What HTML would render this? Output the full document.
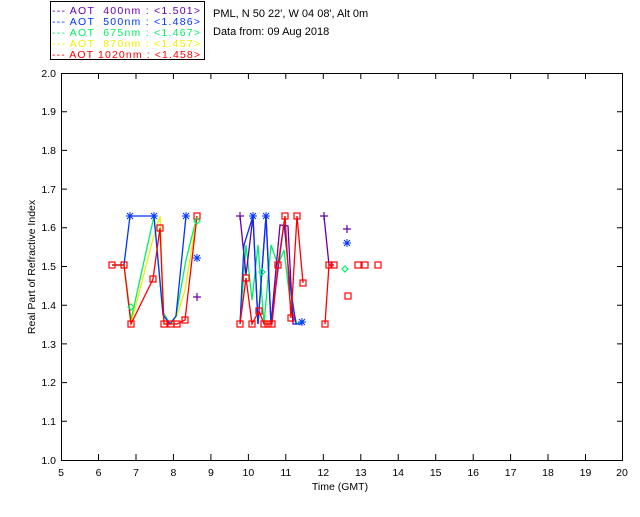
<!DOCTYPE html>
<html><head><style>
body{margin:0;background:#fff;width:640px;height:512px;overflow:hidden}
svg text{font-family:"Liberation Sans",sans-serif;font-size:10.5px}
</style></head><body>
<svg width="640" height="512" xmlns="http://www.w3.org/2000/svg">
<rect x="50.5" y="1.5" width="154" height="58" fill="none" stroke="#000"/>
<g font-size="11">
<text x="52" y="14" fill="#6600aa" textLength="148" lengthAdjust="spacing">--- AOT &#160;400nm : &lt;1.501&gt;</text>
<text x="52" y="25" fill="#0033ff" textLength="148" lengthAdjust="spacing">--- AOT &#160;500nm : &lt;1.486&gt;</text>
<text x="52" y="36" fill="#00ee66" textLength="148" lengthAdjust="spacing">--- AOT &#160;675nm : &lt;1.467&gt;</text>
<text x="52" y="47" fill="#eeee00" textLength="148" lengthAdjust="spacing">--- AOT &#160;870nm : &lt;1.457&gt;</text>
<text x="52" y="58" fill="#ff0000" textLength="148" lengthAdjust="spacing">--- AOT 1020nm : &lt;1.458&gt;</text>
</g>
<text x="213" y="17" style="font-size:11px">PML, N 50 22', W 04 08', Alt 0m</text>
<text x="213" y="35" style="font-size:11px">Data from: 09 Aug 2018</text>
<rect x="61.5" y="73.5" width="561" height="387" fill="none" stroke="#000"/>
<g stroke="#000">
<path d="M98.5 73v6M136 73v6M173.4 73v6M210.9 73v6M248.4 73v6M285.8 73v6M323.3 73v6M360.8 73v6M398.2 73v6M435.7 73v6M473.2 73v6M510.6 73v6M548 73v6M585.5 73v6
M98.5 460v-6M136 460v-6M173.4 460v-6M210.9 460v-6M248.4 460v-6M285.8 460v-6M323.3 460v-6M360.8 460v-6M398.2 460v-6M435.7 460v-6M473.2 460v-6M510.6 460v-6M548 460v-6M585.5 460v-6
M61 421.3h6M61 382.6h6M61 343.9h6M61 305.2h6M61 266.5h6M61 227.8h6M61 189.1h6M61 150.4h6M61 111.7h6
M623 421.3h-6M623 382.6h-6M623 343.9h-6M623 305.2h-6M623 266.5h-6M623 227.8h-6M623 189.1h-6M623 150.4h-6M623 111.7h-6"/>
</g>
<g text-anchor="middle">
<text x="61" y="476">5</text><text x="98.5" y="476">6</text><text x="136" y="476">7</text><text x="173.4" y="476">8</text><text x="210.9" y="476">9</text><text x="248.4" y="476">10</text><text x="285.8" y="476">11</text><text x="323.3" y="476">12</text><text x="360.8" y="476">13</text><text x="398.2" y="476">14</text><text x="435.7" y="476">15</text><text x="473.2" y="476">16</text><text x="510.6" y="476">17</text><text x="548" y="476">18</text><text x="585.5" y="476">19</text><text x="622" y="476">20</text>
<text x="340" y="490">Time (GMT)</text>
</g>
<g text-anchor="end">
<text x="56" y="464">1.0</text><text x="56" y="425">1.1</text><text x="56" y="386">1.2</text><text x="56" y="348">1.3</text><text x="56" y="309">1.4</text><text x="56" y="270">1.5</text><text x="56" y="231">1.6</text><text x="56" y="193">1.7</text><text x="56" y="154">1.8</text><text x="56" y="115">1.9</text><text x="56" y="77">2.0</text>
</g>
<text transform="translate(35,267) rotate(-90)" text-anchor="middle">Real Part of Refractive Index</text>
<g fill="none" stroke-width="1.3">
<polyline stroke="#00ee66" points="112,265 124,265 131,320 154,216 163,312 170,324 176,316 186,260 197,216"/>
<polyline stroke="#eeee00" points="112,265 124,265 131,324 153,239 160,216 164,324 171,324 177,316 185,290 197,216"/>
<polyline stroke="#0033ff" points="112,265 124,265 130,216 154,216 163,315 170,324 176,316 186,216"/>
<polyline stroke="#00ee66" points="240,324 246,245 252,300 258,245 264,324 271,245 278,265 284,250 290,300 297,324 303,320"/>
<polyline stroke="#6600aa" points="240,216 246,275 253,216 258,324 266,216 271,324 280,225 288,226 293,324 296,324"/>
<polyline stroke="#0033ff" points="240,324 244,245 253,216 258,324 266,216 271,324 284,223 290,285 296,324 302,324"/>
<polyline stroke="#6600aa" points="324,216 329,265 334,265"/>
<polyline stroke="#ff0000" points="112,265 124,265 131,324 153,279 160,228 164,324 171,324 177,324 185,320 197,216"/>
<polyline stroke="#ff0000" points="240,324 246,278 252,324 259,311 264,324 268,324 272,324 278,265 285,216 291,318 297,216 303,283"/>
<polyline stroke="#ff0000" points="325,324 329,265 334,265"/>
</g>
<g fill="none" stroke="#ff0000" stroke-width="1.2">
<rect x="109" y="262" width="6" height="6"/><rect x="121" y="262" width="6" height="6"/><rect x="128" y="321" width="6" height="6"/><rect x="150" y="276" width="6" height="6"/><rect x="157" y="225" width="6" height="6"/><rect x="161" y="321" width="6" height="6"/><rect x="168" y="321" width="6" height="6"/><rect x="174" y="321" width="6" height="6"/><rect x="182" y="317" width="6" height="6"/><rect x="194" y="213" width="6" height="6"/>
<rect x="237" y="321" width="6" height="6"/><rect x="243" y="275" width="6" height="6"/><rect x="249" y="321" width="6" height="6"/><rect x="256" y="308" width="6" height="6"/><rect x="261" y="321" width="6" height="6"/><rect x="265" y="321" width="6" height="6"/><rect x="269" y="321" width="6" height="6"/><rect x="275" y="262" width="6" height="6"/><rect x="282" y="213" width="6" height="6"/><rect x="288" y="315" width="6" height="6"/><rect x="294" y="213" width="6" height="6"/><rect x="300" y="280" width="6" height="6"/>
<rect x="322" y="321" width="6" height="6"/><rect x="326" y="262" width="6" height="6"/><rect x="331" y="262" width="6" height="6"/><rect x="345" y="293" width="6" height="6"/><rect x="355" y="262" width="6" height="6"/><rect x="362" y="262" width="6" height="6"/><rect x="375" y="262" width="6" height="6"/>
</g>
<g stroke="#0033ff" stroke-width="1">
<path d="M126 216h8M130 212v8M127 213l6 6M133 213l-6 6 M150 216h8M154 212v8M151 213l6 6M157 213l-6 6 M182 216h8M186 212v8M183 213l6 6M189 213l-6 6 M193 258h8M197 254v8M194 255l6 6M200 255l-6 6 M249 216h8M253 212v8M250 213l6 6M256 213l-6 6 M262 216h8M266 212v8M263 213l6 6M269 213l-6 6 M343 243h8M347 239v8M344 240l6 6M350 240l-6 6 M298 322h8M302 318v8M299 319l6 6M305 319l-6 6"/>
</g>
<g stroke="#6600aa" stroke-width="1.2">
<path d="M193 297h8M197 293v8 M236 216h8M240 212v8 M320 216h8M324 212v8 M343 229h8M347 225v8"/>
</g>
<g fill="none" stroke="#00ee66" stroke-width="1.2">
<path d="M131 304l3 3-3 3-3-3z M262 269l3 3-3 3-3-3z M345 266l3 3-3 3-3-3z M197 218l3 3-3 3-3-3z"/>
</g>
</svg>
</body></html>
